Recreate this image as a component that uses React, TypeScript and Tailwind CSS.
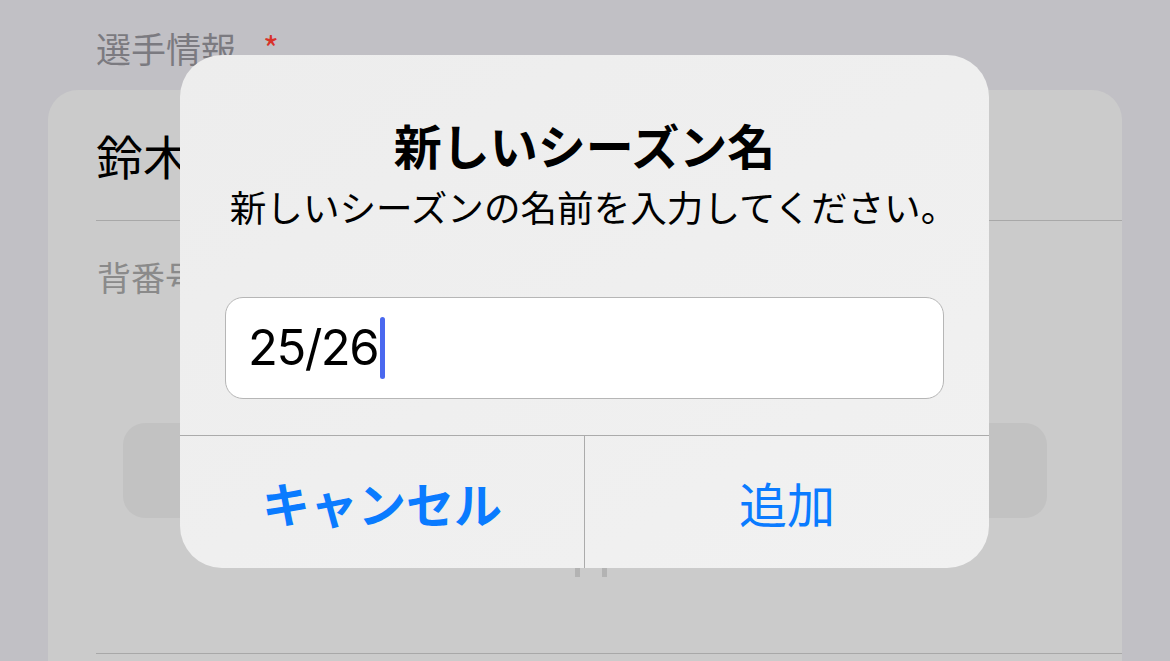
import React from 'react'

const jp = 'font-["Noto_Sans_CJK_JP","Noto_Sans",sans-serif]'

export default function App() {
  return (
    <div className={`relative h-[661px] w-[1170px] overflow-hidden bg-[#c1c0c5] ${jp}`}>
      {/* Background form (dimmed) */}
      <div className="flex h-[90px] items-start pl-[96px] pt-[22px]">
        <span className="text-[35px] leading-[52px] text-[#7b7a80]">選手情報</span>
        <span className="ml-[27px] mt-[6px] text-[34px] leading-[40px] text-[#d8322a]">*</span>
      </div>

      <div className="mx-[48px] h-[600px] rounded-t-[30px] bg-[#cbcbcb]">
        <div className="ml-[48px] flex h-[131px] items-center border-b border-[#a8a8a8]">
          <span className="text-[47px] leading-[60px] text-black">鈴木 一郎</span>
        </div>
        <div className="pl-[49px] pt-[34px]">
          <span className="text-[34px] leading-[44px] text-[#8a8a8a]">背番号</span>
        </div>
        <div className="ml-[75px] mr-[75px] mt-[124px] h-[95px] rounded-[22px] bg-[#c2c2c2]" />
        <div className="flex justify-center gap-[22px] pt-[49px] pl-[12px]">
          <div className="h-[10px] w-[5px] bg-[#b3b3b3]" />
          <div className="h-[10px] w-[5px] bg-[#b3b3b3]" />
        </div>
        <div className="ml-[48px] mt-[76px] border-b border-[#a8a8a8]" />
      </div>

      {/* Alert dialog */}
      <div className="absolute left-[180px] top-[55px] flex h-[513px] w-[809px] flex-col overflow-hidden rounded-[42px] bg-gradient-to-br from-[#ededed] to-[#f1f1f1]">
        <div className="flex flex-col items-center pt-[61px]">
          <div className="text-[48px] font-bold leading-[56px] text-black">新しいシーズン名</div>
          <div className="mt-[13px] pl-[18px] text-[36.6px] leading-[44px] text-black">
            新しいシーズンの名前を入力してください。
          </div>
        </div>
        <div className="mx-[45px] mt-[68px] flex h-[102px] items-center rounded-[18px] border border-[#b6b6b6] bg-white pl-[22px]">
          <span className='font-["Inter",sans-serif] text-[49px] leading-[60px] tracking-[-1.5px] text-black'>
            25/26
          </span>
          <span className="ml-[2px] h-[62px] w-[5px] rounded-full bg-[#4a68ef]" />
        </div>
        <div className="mt-[36px] flex flex-1 border-t border-[#ababab]">
          <div className="flex flex-1 items-center justify-center border-r border-[#ababab]">
            <span className="text-[48px] font-bold leading-[56px] text-[#0a7bff]">キャンセル</span>
          </div>
          <div className="flex flex-1 items-center justify-center">
            <span className="text-[48px] leading-[56px] text-[#0a7bff]">追加</span>
          </div>
        </div>
      </div>
    </div>
  )
}
